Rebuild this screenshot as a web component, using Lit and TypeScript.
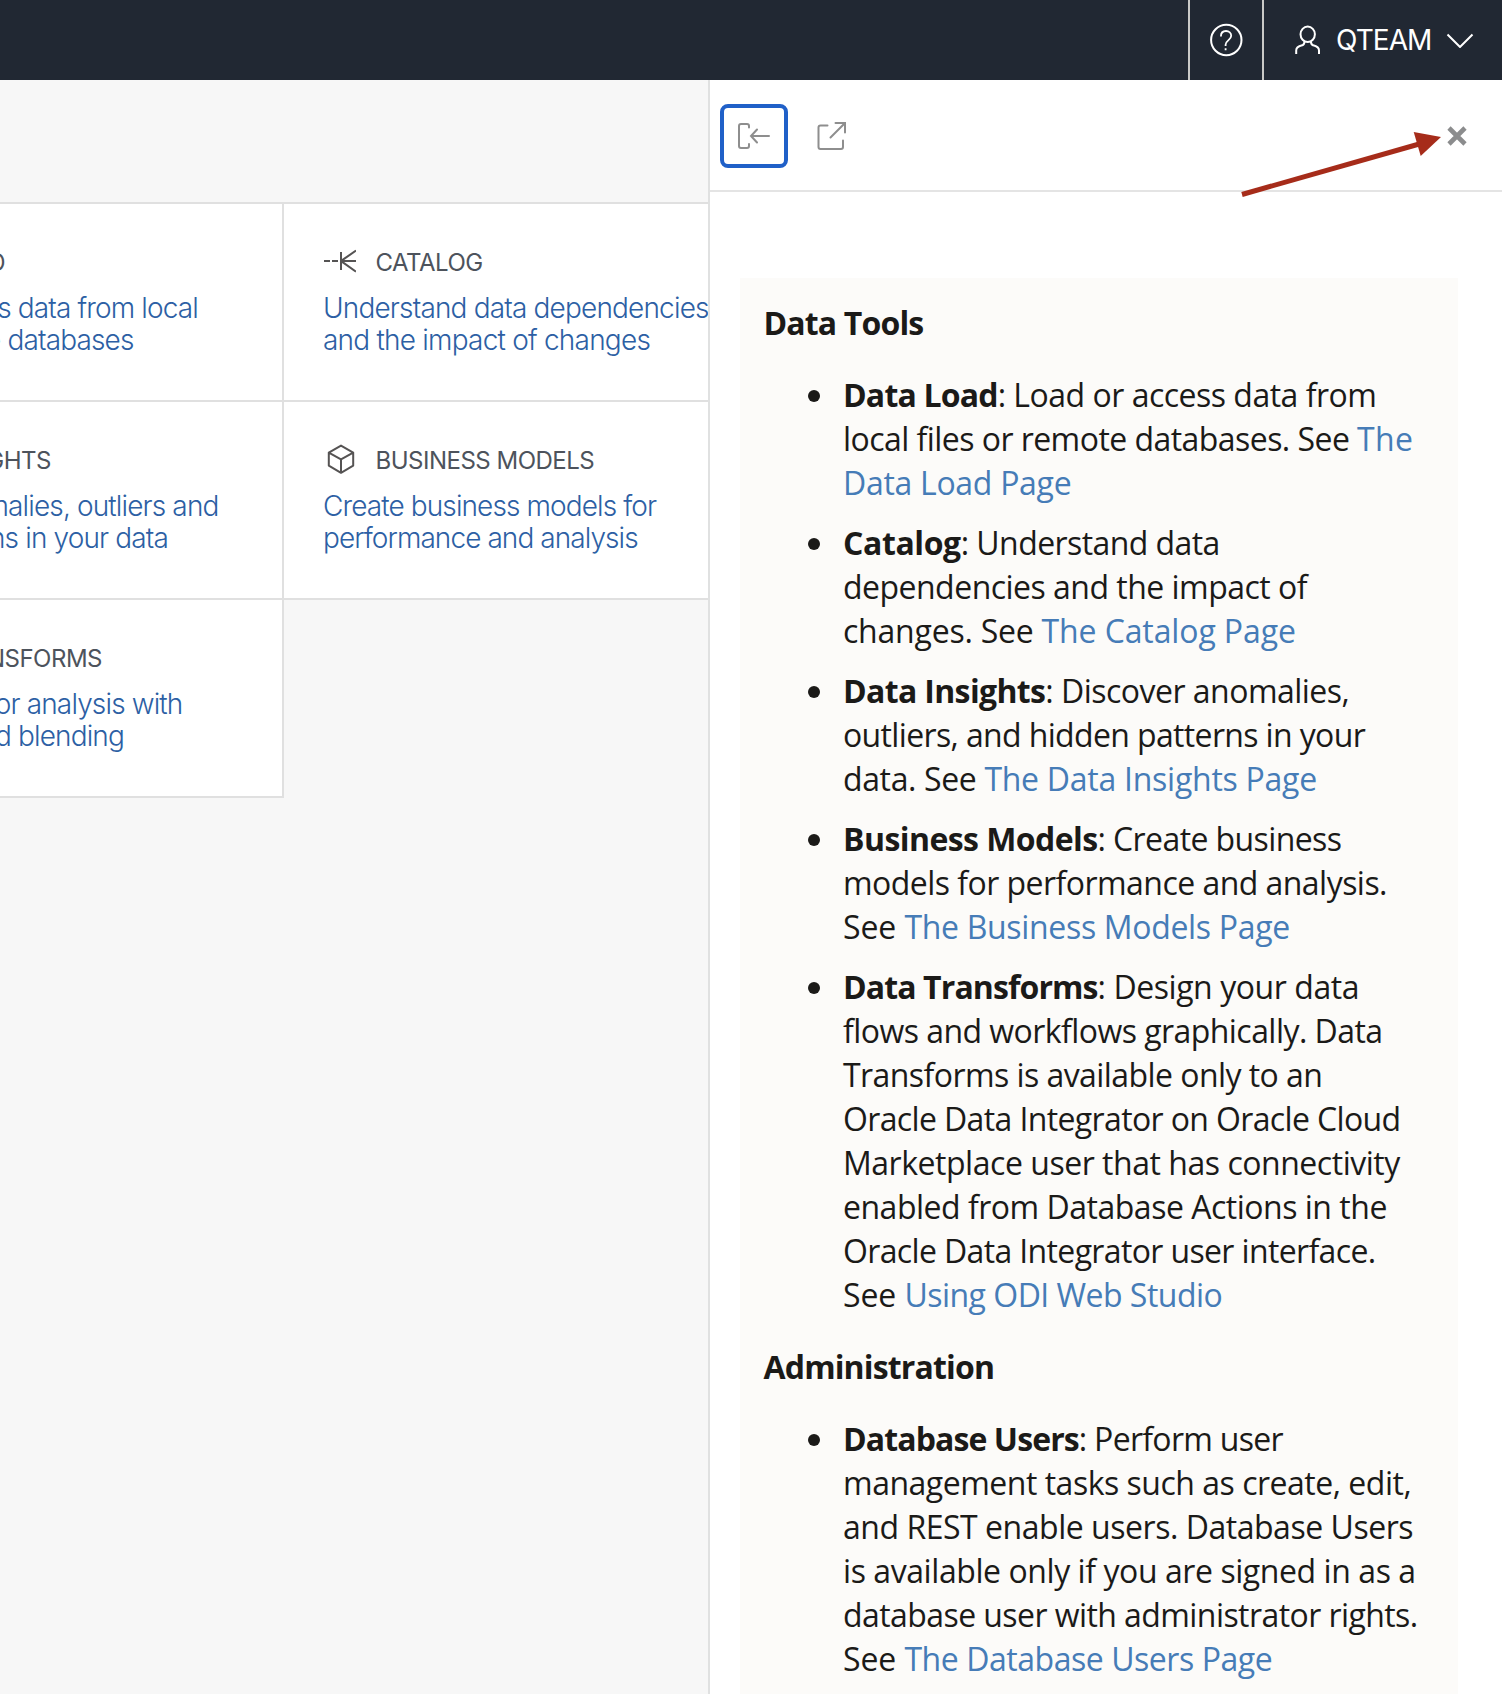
import { LitElement, html, css, svg, nothing } from 'lit';
import { customElement } from 'lit/decorators.js';

type Kind = 'strong' | 'text' | 'link';
/** kind, text, tracking in px */
type Seg = [Kind, string, number];
type Item = Seg[][];

const TOOLS: Item[] = [
  [
    [['strong', 'Data Load', -0.82], ['text', ': Load or access data from', -0.5]],
    [['text', 'local files or remote databases. See ', -0.55], ['link', 'The', 0.3]],
    [['link', 'Data Load Page', -0.3]],
  ],
  [
    [['strong', 'Catalog', -0.4], ['text', ': Understand data', -0.58]],
    [['text', 'dependencies and the impact of', -0.52]],
    [['text', 'changes. See ', -0.22], ['link', 'The Catalog Page', -0.12]],
  ],
  [
    [['strong', 'Data Insights', -0.65], ['text', ': Discover anomalies,', -0.52]],
    [['text', 'outliers, and hidden patterns in your', -0.64]],
    [['text', 'data. See ', -0.37], ['link', 'The Data Insights Page', -0.26]],
  ],
  [
    [['strong', 'Business Models', -0.57], ['text', ': Create business', -0.6]],
    [['text', 'models for performance and analysis.', -0.54]],
    [['text', 'See ', -0.1], ['link', 'The Business Models Page', -0.32]],
  ],
  [
    [['strong', 'Data Transforms', -0.89], ['text', ': Design your data', -0.44]],
    [['text', 'flows and workflows graphically. Data', -0.55]],
    [['text', 'Transforms is available only to an', -0.56]],
    [['text', 'Oracle Data Integrator on Oracle Cloud', -0.63]],
    [['text', 'Marketplace user that has connectivity', -0.47]],
    [['text', 'enabled from Database Actions in the', -0.49]],
    [['text', 'Oracle Data Integrator user interface.', -0.64]],
    [['text', 'See ', -0.1], ['link', 'Using ODI Web Studio', -0.52]],
  ],
];

const ADMIN: Item[] = [
  [
    [['strong', 'Database Users', -0.9], ['text', ': Perform user', -0.7]],
    [['text', 'management tasks such as create, edit,', -0.49]],
    [['text', 'and REST enable users. Database Users', -0.47]],
    [['text', 'is available only if you are signed in as a', -0.43]],
    [['text', 'database user with administrator rights.', -0.57]],
    [['text', 'See ', -0.1], ['link', 'The Database Users Page', -0.45]],
  ],
];

const catalogIcon = svg`<svg class="icon" viewBox="0 0 32 32" fill="none" stroke="#555353" stroke-width="2">
  <path d="M0 16H6M8 16H14M17 7V25M17 16H32M32 5.6L17.5 15.6M17.5 16.4L32 26.6"/></svg>`;
const cubeIcon = svg`<svg class="icon" viewBox="0 0 32 32" fill="none" stroke="#555353" stroke-width="2" stroke-linejoin="round">
  <path d="M17 2.6L29.2 9.6V22.6L17 29.8L4.8 22.6V9.6ZM4.8 9.6L17 16.4L29.2 9.6M17 16.4V29.8"/></svg>`;

@customElement('app-root')
export class AppRoot extends LitElement {
  static styles = css`
    :host { display: flex; flex-direction: column; width: 100%; height: 1694px; overflow: hidden; background: #f7f7f7; font-family: Inter, "Liberation Sans", sans-serif; }
    * { box-sizing: border-box; }
    svg { display: block; flex: none; }
    .topbar { height: 80px; flex: none; background: #212833; display: flex; justify-content: flex-end; color: #fff; }
    .help { width: 76px; border-left: 2px solid #c9c9c7; border-right: 2px solid #c9c9c7; display: flex; align-items: center; justify-content: center; }
    .user { width: 238px; display: flex; align-items: center; padding-left: 31px; }
    .name { font-size: 28px; line-height: 40px; letter-spacing: -0.95px; margin-left: 15px; width: 109.5px; }
    .body { display: flex; flex: 1; min-height: 0; }
    .main { width: 708px; flex: none; padding-top: 122px; overflow: hidden; }
    .grid { display: grid; grid-template-columns: 284px 424px; grid-auto-rows: 198px; border-top: 2px solid #e0e0e0; }
    .cell { background: #fff; border-bottom: 2px solid #e0e0e0; padding-top: 39px; overflow: hidden; white-space: nowrap; }
    .left { border-right: 2px solid #e0e0e0; }
    .right { padding-left: 40px; }
    .head { display: flex; align-items: center; height: 36px; margin-bottom: 13px; }
    .title { font-size: 24px; color: #4d535c; letter-spacing: -0.5px; line-height: 36px; padding-top: 2px; height: 38px; margin-bottom: -2px; }
    .right .title { margin-left: 19.5px; }
    .desc { font-size: 28px; line-height: 32px; color: #2d5fa4; letter-spacing: -0.86px; font-weight: 350; }
    .right .desc { margin-left: -1px; }
    .icon { width: 32px; height: 32px; }
    .end { display: flex; justify-content: flex-end; }
    .panel { flex: 1; background: #fff; border-left: 2px solid #e0e1e1; display: flex; flex-direction: column; min-width: 0; position: relative; }
    .tools { height: 112px; flex: none; border-bottom: 2px solid #e4e4e4; display: flex; align-items: center; padding: 2px 33px 0 10px; }
    .dock { width: 68px; height: 64px; border: 4px solid #2060c8; border-radius: 8px; display: flex; align-items: center; justify-content: center; }
    .open { margin-left: 28px; }
    .close { margin-left: auto; }
    .arrow { position: absolute; left: 522px; top: 44px; }
    .doc { margin: 86px 44px 0 30px; height: 1416px; flex: none; background: #fcfbf9; padding-top: 23px; font: 32px/44px "Open Sans", "Noto Sans", sans-serif; color: #1b1a18; }
    .h { font-weight: 700; padding-left: 23.5px; height: 44px; letter-spacing: -0.85px; }
    .list { margin: 28px 0; padding: 0 0 0 68px; list-style: none; display: flex; flex-direction: column; gap: 16px; }
    .item { display: flex; }
    .dot { width: 12px; height: 12px; border-radius: 50%; background: #1b1a18; margin: 17px 23px 0 0; flex: none; }
    .line { height: 44px; white-space: pre; }
    .strong { font-weight: 700; }
    .link { color: #467cb7; }
  `;

  private end(text: string, width: number) {
    return html`<div class="end" style="width:${width}px">${text}</div>`;
  }

  private leftCell(title: [string, number], lines: [string, number][]) {
    return html`<div class="cell left">
      <div class="head"><div class="title">${this.end(...title)}</div></div>
      <div class="desc">${lines.map((l) => this.end(...l))}</div>
    </div>`;
  }

  private rightCell(icon: unknown, title: string, lines: [string, number][]) {
    return html`<div class="cell right">
      <div class="head">${icon}<div class="title">${title}</div></div>
      <div class="desc">${lines.map(([t, s]) => html`<div style="letter-spacing:${s}px">${t}</div>`)}</div>
    </div>`;
  }

  private list(items: Item[]) {
    return html`<ul class="list">${items.map((item) => html`<li class="item"><span class="dot"></span><div>${item.map(
      (line) => html`<div class="line">${line.map(([k, t, s]) => html`<span class=${k} style="letter-spacing:${s}px">${t}</span>`)}</div>`
    )}</div></li>`)}</ul>`;
  }

  render() {
    return html`
      <header class="topbar">
        <div class="help">
          <svg width="34" height="34" viewBox="0 0 34 34" fill="none" stroke="#fff" stroke-width="2">
            <circle cx="17.3" cy="17" r="15.2"/>
            <path stroke-width="1.8" d="M11.9 13.4C11.9 10 14 8 17 8C20 8 22.200 10 22.200 12.800C22.200 17 16.600 17.200 16.600 21.800V23M16.600 25.200V27.200"/>
          </svg>
        </div>
        <div class="user">
          <svg width="26" height="30" viewBox="0 0 26 30" fill="none" stroke="#fff" stroke-width="2">
            <ellipse cx="12.700" cy="9.300" rx="7.200" ry="7.700"/>
            <path d="M1.200 29V25.500C1.200 21.500 5 20.800 7.500 20.200C9.500 19.600 9.500 18 9.500 16.300M24 29V25.500C24 21.500 20.400 20.800 17.900 20.200C15.900 19.600 15.900 18 15.900 16.300"/>
          </svg>
          <span class="name">QTEAM</span>
          <svg width="28" height="16" viewBox="0 0 28 16" fill="none" stroke="#fff" stroke-width="2"><path d="M1.500 2.500L14 15L26.500 2.500"/></svg>
        </div>
      </header>
      <div class="body">
        <main class="main">
          <div class="grid">
            ${this.leftCell(['D', 5], [['s data from local', 198], ['e databases', 133.5]])}
            ${this.rightCell(catalogIcon, 'CATALOG', [['Understand data dependencies', -0.83], ['and the impact of changes', -0.78]])}
            ${this.leftCell(['GHTS', 51], [['malies, outliers and', 218.5], ['ns in your data', 168]])}
            ${this.rightCell(cubeIcon, 'BUSINESS MODELS', [['Create business models for', -0.9], ['performance and analysis', -0.93]])}
            ${this.leftCell(['NSFORMS', 102], [['or analysis with', 182.5], ['d blending', 124]])}
            ${nothing}
          </div>
        </main>
        <aside class="panel">
          <div class="tools">
            <div class="dock">
              <svg width="32" height="28" viewBox="0 0 32 28" fill="none" stroke="#8e8e8e" stroke-width="2" stroke-linecap="round">
                <path d="M11 5.500V4C11 2.600 10.200 2 9 2H3C1.800 2 1 2.600 1 4V24C1 25.400 1.800 26 3 26H9C10.200 26 11 25.400 11 24V22M31 14H13M19 7.500L13 14L19 20.500"/>
              </svg>
            </div>
            <svg class="open" width="32" height="32" viewBox="0 0 32 32" fill="none" stroke="#8e8e8e" stroke-width="2" stroke-linecap="round">
              <path d="M11.500 5.500H4.500C3 5.500 2.500 6.300 2.500 7.500V27C2.500 28.400 3.200 29 4.500 29H25C26.400 29 27 28.400 27 27V20.500M14.500 17.500L28.500 3.500M19.500 3H29V12.500"/>
            </svg>
            <svg class="close" width="24" height="24" viewBox="0 0 24 24" fill="none" stroke="#8b8c8d" stroke-width="4.600"><path d="M4 4L20 20M20 4L4 20"/></svg>
          </div>
          <svg class="arrow" width="220" height="80" viewBox="0 0 220 80">
            <path d="M10 70.500L189 19.500" stroke="#a62c1a" stroke-width="5"/>
            <path d="M209 13L181.700 8L188.700 32Z" fill="#a62c1a"/>
          </svg>
          <article class="doc">
            <div class="h">Data Tools</div>
            ${this.list(TOOLS)}
            <div class="h">Administration</div>
            ${this.list(ADMIN)}
          </article>
        </aside>
      </div>
    `;
  }
}
